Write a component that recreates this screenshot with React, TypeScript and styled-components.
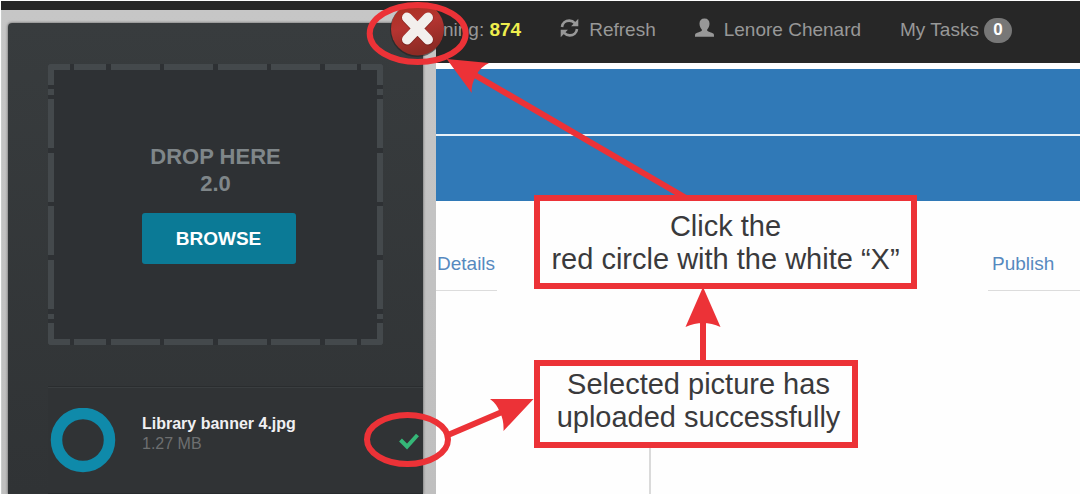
import React from "react";
import styled, { createGlobalStyle } from "styled-components";

const RED = "#ec3237";

const GlobalStyle = createGlobalStyle`
  * { box-sizing: border-box; }
  body {
    margin: 0;
    background: #fefefe;
    font-family: "Liberation Sans", Arial, sans-serif;
    font-size: 19px;
    line-height: 27px;
  }
  button { font: inherit; border: 0; padding: 0; cursor: pointer; }
  a { text-decoration: none; }
  p, ul { margin: 0; padding: 0; }
`;

const Page = styled.div`
  position: relative;
  min-height: 100vh;
  overflow: hidden;
  padding: 1px 0 0 1px;
`;

const NavBar = styled.nav`
  display: flex;
  gap: 39px;
  height: 62px;
  padding: 15px 0 0 442px;
  background: #272727;
  color: #989898;
  white-space: nowrap;
`;

const Remaining = styled.span`
  strong { color: #eeee4e; }
`;

const NavLink = styled.a<{ $gap?: number }>`
  display: flex;
  gap: ${(p) => p.$gap ?? 10}px;
  color: inherit;
  svg { margin-top: 2px; }
`;

const Badge = styled.span`
  width: 28px;
  height: 25px;
  margin-top: 2px;
  border-radius: 13px;
  background: #777;
  color: #fff;
  font-size: 17px;
  font-weight: bold;
  line-height: 24px;
  text-align: center;
`;

const Banner = styled.header`
  display: grid;
  gap: 2px;
  margin-top: 6px;
  background: #e8f1f8;
`;

const BannerRow = styled.div`
  height: 65px;
  background: #3079b7;
`;

const Tabs = styled.div`
  display: flex;
  justify-content: space-between;
  margin-top: 49px;
  padding-left: 435px;
`;

const Tab = styled.a<{ $width: number; $inset: number }>`
  width: ${(p) => p.$width}px;
  height: 41px;
  padding-left: ${(p) => p.$inset}px;
  border-bottom: 1px solid #dcdcdc;
  color: #5689bf;
`;

const Content = styled.main`
  height: 94px;
  margin: 109px 0 0 648px;
  border-left: 2px solid #dadada;
`;

const Dialog = styled.section`
  position: absolute;
  top: 10px;
  bottom: 0;
  left: 1px;
  width: 435px;
  padding: 13px 13px 0 7px;
  background: linear-gradient(#c6c6c6, #bfbfbf);
  box-shadow: inset 1px 0 #c9cccb;
`;

const Panel = styled.div`
  height: 100%;
  padding: 41px 0 0 40px;
  border-top-left-radius: 4px;
  background: linear-gradient(#383c3e, #303335);
  box-shadow: 0 0 3px #555;
`;

const CloseButton = styled.button`
  position: absolute;
  top: -9px;
  right: -9px;
  width: 56px;
  height: 56px;
  background: none;
  svg { display: block; }
`;

const DropZone = styled.div`
  position: relative;
  display: flex;
  flex-direction: column;
  align-items: center;
  width: 335px;
  height: 281px;
  padding-top: 79px;
  border-radius: 3px;
  background: #2e3134;
  color: #7f8689;
  font-size: 22px;
  font-weight: bold;
  text-align: center;
`;

const DashFrame = styled.svg`
  position: absolute;
  inset: 0;
`;

const Browse = styled.button`
  width: 154px;
  height: 51px;
  margin: 16px 0 0 6px;
  border-radius: 3px;
  background: #0b7a96;
  color: #fff;
  font-size: 19px;
  font-weight: bold;
`;

const FileList = styled.ul`
  margin-top: 41px;
  list-style: none;
  border-top: 1px solid #2a2d2f;
`;

const FileItem = styled.li`
  display: flex;
  height: 107px;
  padding: 20px 4px 0 2px;
  border-top: 1px solid #3a3e40;
  border-bottom: 1px solid #282b2d;
  background: #303335;
`;

const FileText = styled.div`
  flex: 1;
  padding: 6px 0 0 26px;
  color: #6d6f70;
  font-size: 16px;
  line-height: 20px;
  strong { display: block; color: #f0f0f2; }
`;

const Tick = styled.svg`
  margin-top: 24px;
`;

const Drawing = styled.svg`
  position: absolute;
  top: 0;
  left: 0;
  pointer-events: none;
`;

const Callout = styled.p<{ $top: number; $width: number; $pad: string }>`
  position: absolute;
  top: ${(p) => p.$top}px;
  left: 534px;
  width: ${(p) => p.$width}px;
  padding: ${(p) => p.$pad};
  border: 6px solid ${RED};
  background: #fefefe;
  color: #3a3a3c;
  font-size: 29px;
  line-height: 33px;
  text-align: center;
  white-space: nowrap;
`;

const RefreshIcon = () => (
  <svg width="19" height="20" viewBox="0 0 19 20" aria-hidden="true">
    <g fill="none" stroke="#989898" strokeWidth="2.6">
      <path d="M2 9C2.4 5 5.600 2.600 9.300 2.600c2.300 0 4.100.900 5.500 2.500" />
      <path d="M17 11c-.4 4-3.600 6.400-7.300 6.400-2.300 0-4.100-.9-5.500-2.500" />
    </g>
    <path fill="#989898" d="M18.300.700v7.500h-7.200zM.700 19.300v-7.500h7.200z" />
  </svg>
);

const UserIcon = () => (
  <svg width="19" height="20" viewBox="0 0 19 20" aria-hidden="true">
    <path
      fill="#989898"
      d="M9.500.500c3.300 0 5 2 5 5 0 2.400-.8 4.500-2.300 5.900v1.300c.2.700 4.800 1.900 6.100 2.900.7.600.7 1.700.7 3.200H0c0-1.500 0-2.600.7-3.200C2 14.600 6.600 13.400 6.800 12.700v-1.300C5.300 10 4.500 7.900 4.500 5.500c0-3 1.700-5 5-5z"
    />
  </svg>
);

const CloseIcon = () => (
  <svg width="56" height="56" viewBox="0 0 56 56" aria-hidden="true">
    <defs>
      <linearGradient id="closeFill" x1="0" y1="0" x2="0.3" y2="1">
        <stop offset="0" stopColor="#a72f1d" />
        <stop offset="0.5" stopColor="#b53431" />
        <stop offset="1" stopColor="#8d2b24" />
      </linearGradient>
    </defs>
    <circle cx="28" cy="29" r="27" fill="#222" opacity="0.6" />
    <circle cx="28.500" cy="28" r="26.500" fill="url(#closeFill)" />
    <path d="M18 17l21 22M39 17L18 39" stroke="#5f1a16" strokeOpacity="0.5" strokeWidth="11" strokeLinecap="round" />
    <path d="M18 16.500l21 22M39 16.500L18 38.500" stroke="#f3efed" strokeWidth="10" strokeLinecap="round" />
  </svg>
);

const columns = [[0, 22], [26, 32], [63, 49], [116, 49], [170, 49], [223, 49], [277, 32], [313, 22]];
const rows = [[0, 21], [25, 6], [35, 49], [89, 49], [142, 49], [196, 49], [250, 5], [259, 22]];

const Dashes = () => (
  <DashFrame width="335" height="281" aria-hidden="true">
    <clipPath id="zoneShape"><rect width="335" height="281" rx="3" /></clipPath>
    <g fill="#44494c" clipPath="url(#zoneShape)">
      {columns.map(([x, w]) => (
        <React.Fragment key={x}>
          <rect x={x} y="0" width={w} height="6" />
          <rect x={x} y="275" width={w} height="6" />
        </React.Fragment>
      ))}
      {rows.map(([y, h]) => (
        <React.Fragment key={y}>
          <rect x="0" y={y} width="6" height={h} />
          <rect x="329" y={y} width="6" height={h} />
        </React.Fragment>
      ))}
    </g>
  </DashFrame>
);

export default function App() {
  return (
    <Page>
      <GlobalStyle />
      <NavBar>
        <Remaining>ning: <strong>874</strong></Remaining>
        <NavLink href="#refresh"><RefreshIcon />Refresh</NavLink>
        <NavLink href="#profile"><UserIcon />Lenore Chenard</NavLink>
        <NavLink href="#tasks" $gap={5}>My Tasks<Badge>0</Badge></NavLink>
      </NavBar>
      <Banner>
        <BannerRow />
        <BannerRow />
      </Banner>
      <Tabs>
        <Tab href="#details" $width={61} $inset={1}>Details</Tab>
        <Tab href="#publish" $width={92} $inset={4}>Publish</Tab>
      </Tabs>
      <Content />

      <Dialog aria-label="Upload picture">
        <Panel>
          <DropZone>
            <Dashes />
            <p>DROP HERE</p>
            <p>2.0</p>
            <Browse type="button">BROWSE</Browse>
          </DropZone>
          <FileList>
            <FileItem>
              <svg width="66" height="66" aria-hidden="true">
                <circle cx="33" cy="32" r="26.500" fill="none" stroke="#0f8aaa" strokeWidth="11.500" />
              </svg>
              <FileText>
                <strong>Library banner 4.jpg</strong>
                1.27 MB
              </FileText>
              <Tick width="20" height="18" role="img" aria-label="Uploaded">
                <path d="M1.500 8l6.500 6.500L18.500 3" fill="none" stroke="#35b778" strokeWidth="4" />
              </Tick>
            </FileItem>
          </FileList>
        </Panel>
        <CloseButton type="button" aria-label="Close"><CloseIcon /></CloseButton>
      </Dialog>

      <Drawing width="1080" height="494" aria-hidden="true">
        <g fill="none" stroke={RED} strokeWidth="6">
          <ellipse cx="417.700" cy="33.500" rx="48" ry="28.500" />
          <ellipse cx="407.500" cy="439.500" rx="40.500" ry="24.500" />
          <path d="M474 74.500L686 198M703 320v44M448 435l54-23" />
        </g>
        <g fill={RED}>
          <path d="M446.700 59L489 63Q480 67 476 76Q471 84 471.700 93z" />
          <path d="M703 287l17.500 40q-17.500-8-35 0z" />
          <path d="M533.500 399L503.500 431Q504 420 500 412.500Q497 404 490 399z" />
        </g>
      </Drawing>
      <Callout $top={195} $width={383} $pad="9px 0 7px">
        Click the<br />red circle with the white “X”
      </Callout>
      <Callout $top={360} $width={324} $pad="2px 0 8px 5px">
        Selected picture has<br />uploaded successfully
      </Callout>
    </Page>
  );
}
